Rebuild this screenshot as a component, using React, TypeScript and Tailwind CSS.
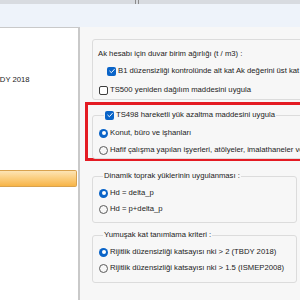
import type { ReactNode } from 'react';

const Check = ({ checked }: { checked?: boolean }) =>
    checked ? (
        <span className="flex h-[9px] w-[9px] shrink-0 items-center justify-center rounded-[2px] bg-[#0a64c8]">
            <svg viewBox="0 0 10 10" className="h-[8px] w-[8px]">
                <path d="M2.2 5.2 L4.2 7.1 L7.9 3" fill="none" stroke="white" strokeWidth="1.2" strokeLinecap="round" strokeLinejoin="round" />
            </svg>
        </span>
    ) : (
        <span className="h-[9px] w-[9px] shrink-0 rounded-[2px] border border-[#3d3d3d] bg-white" />
    );

const Radio = ({ checked }: { checked?: boolean }) =>
    checked ? (
        <span className="flex h-[9px] w-[9px] shrink-0 items-center justify-center rounded-full bg-[#0a64c8]">
            <span className="h-[4px] w-[4px] rounded-full bg-white" />
        </span>
    ) : (
        <span className="h-[9px] w-[9px] shrink-0 rounded-full border border-[#5a5a5a] bg-[#f7f7f7]" />
    );

const Row = ({ children, className = '' }: { children: ReactNode; className?: string }) => (
    <div className={`flex h-[10px] items-center gap-[2px] whitespace-nowrap ${className}`}>{children}</div>
);

export default function App() {
    return (
        <div className="h-[300px] w-[300px] overflow-hidden bg-[#f7f7f7] font-['Liberation_Sans',Arial,sans-serif] text-[7.7px] leading-[10px] text-[#1b1b1b]">
            {/* window chrome */}
            <div className="flex h-[4px] bg-[#d8dbe0]">
                <div className="w-[135px]" />
                <div className="w-[1px] bg-[#8c8c8c]" />
                <div className="w-[2px]" />
                <div className="w-[1px] bg-[#8c8c8c]" />
            </div>
            <div className="h-[23px] bg-[#eef3fa]" />

            <div className="flex h-[273px]">
                {/* tree on the left, scrolled */}
                <div className="w-[80px] shrink-0 overflow-hidden border-t border-r-2 border-[#c9c9c9] bg-white">
                    <Row className="mt-[47px] -ml-[10px]">TBDY 2018</Row>
                    <div className="mt-[85px] h-[17px] w-[77px] rounded-r-[2px] border border-l-0 border-[#d9a24e] bg-gradient-to-b from-[#fde4b4] via-[#fbcd7c] to-[#f7b446]" />
                    <Row className="mt-[7px] -ml-[27px]">Yükleri</Row>
                </div>

                {/* settings */}
                <div className="min-w-0 flex-1 pl-[5px]">
                    <div className="mt-[12px] ml-[7px] h-[61px] w-[240px] rounded-[3px] border border-[#dcdcdc] pl-[5px]">
                        <Row className="mt-[9px]">Ak hesabı için duvar birim ağırlığı (t / m3) :</Row>
                        <Row className="mt-[7px] ml-[9px]">
                            <Check checked />
                            B1 düzensizliği kontrolünde alt kat Ak değerini üst kat Ak değerine göre hesapla
                        </Row>
                        <Row className="mt-[9px] ml-[1px]">
                            <Check />
                            TS500 yeniden dağılım maddesini uygula
                        </Row>
                    </div>

                    <div className="mt-[2px] h-[59px] w-[240px] border-[3px] border-[#e41b23] pl-[4px]">
                        <fieldset className="mt-[5px] h-[49px] rounded-[3px] border border-[#dcdcdc] pl-[6px]">
                            <legend className="ml-[5px] px-[1px]">
                                <Row>
                                    <Check checked />
                                    TS498 hareketli yük azaltma maddesini uygula
                                </Row>
                            </legend>
                            <Row className="mt-[8px]">
                                <Radio checked />
                                Konut, büro ve işhanları
                            </Row>
                            <Row className="mt-[7px]">
                                <Radio />
                                Hafif çalışma yapılan işyerleri, atölyeler, imalathaneler ve benzerleri
                            </Row>
                        </fieldset>
                    </div>

                    <fieldset className="mt-[10px] ml-[7px] w-[205px] rounded-[3px] border border-[#dcdcdc] pb-[8px] pl-[6px]">
                        <legend className="ml-[4px] px-[1px]">
                            <Row>Dinamik toprak yüklerinin uygulanması :</Row>
                        </legend>
                        <Row className="mt-[7px]">
                            <Radio checked />
                            Hd = delta_p
                        </Row>
                        <Row className="mt-[6px]">
                            <Radio />
                            Hd = p+delta_p
                        </Row>
                    </fieldset>

                    <fieldset className="mt-[7px] ml-[7px] w-[205px] rounded-[3px] border border-[#dcdcdc] pb-[9px] pl-[6px]">
                        <legend className="ml-[4px] px-[1px]">
                            <Row>Yumuşak kat tanımlama kriteri :</Row>
                        </legend>
                        <Row className="mt-[7px]">
                            <Radio checked />
                            Rijitlik düzensizliği katsayısı nki &gt; 2 (TBDY 2018)
                        </Row>
                        <Row className="mt-[6px]">
                            <Radio />
                            Rijitlik düzensizliği katsayısı nki &gt; 1.5 (ISMEP2008)
                        </Row>
                    </fieldset>
                </div>
            </div>
        </div>
    );
}
